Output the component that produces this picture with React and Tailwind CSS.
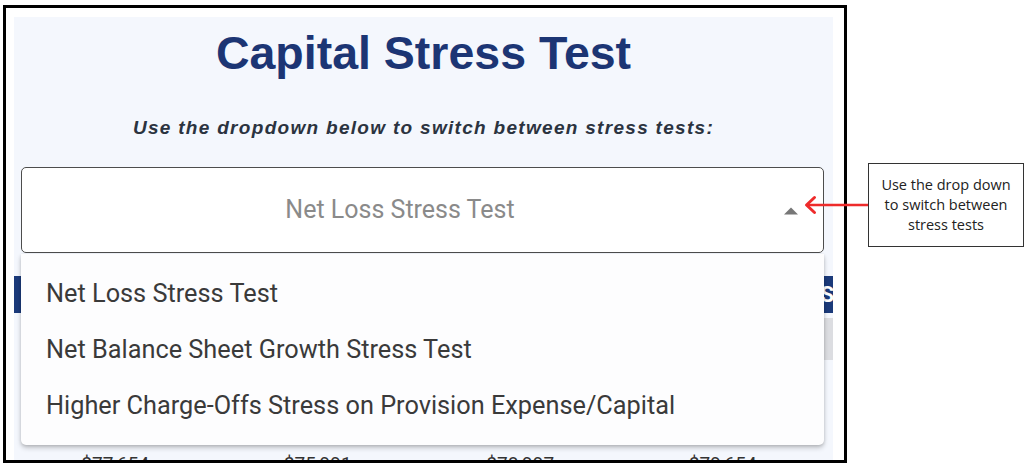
const stressTests = [
  "Net Loss Stress Test",
  "Net Balance Sheet Growth Stress Test",
  "Higher Charge-Offs Stress on Provision Expense/Capital",
];

const totals = ["$77,654", "$75,991", "$78,997", "$79,654"];

function TableBehind() {
  return (
    <div className="mt-[23px] w-full">
      <div className="h-[37px] bg-[#1b3a7a] text-white font-bold text-[22px] flex items-center justify-end overflow-hidden font-['Roboto',sans-serif]">
        <span className="-mr-[1px]">PROJECTIONS</span>
      </div>
      <div className="mt-[5px] h-[42px] grid grid-cols-4">
        <div />
        <div />
        <div />
        <div className="bg-[#dcdde1]" />
      </div>
      <div className="h-[90px]" />
      <div className="grid grid-cols-4 w-[810px] text-[19px] text-[#333] font-['Roboto',sans-serif]">
        {totals.map((t) => (
          <div key={t} className="text-center">{t}</div>
        ))}
      </div>
    </div>
  );
}

function Dropdown() {
  return (
    <>
      <div className="ml-[7px] mr-[9px] mt-[27px] h-[86px] rounded-[5px] border border-[#4d4d4d] bg-white relative flex items-center justify-center pr-[45px]">
        <span className="text-[25px] text-[#8a8a8a] font-['Roboto',sans-serif]">Net Loss Stress Test</span>
        <svg className="absolute right-[25px] top-[39px]" width="14" height="8" viewBox="0 0 14 8">
          <path d="M0 7.5 L7 0.5 L14 7.5 Z" fill="#777" />
        </svg>
      </div>
      <div className="absolute left-[7px] top-[237px] w-[803px] bg-[#fdfdfe] rounded-b-[5px] shadow-[0_3px_5px_rgba(0,0,0,0.2),0_1px_3px_rgba(0,0,0,0.12)] pt-[12px] pb-[11px] font-['Roboto',sans-serif]">
        {stressTests.map((name) => (
          <div key={name} className="h-[56px] flex items-center pl-[25px] text-[25.3px] text-[#3a3a3a]">
            {name}
          </div>
        ))}
      </div>
    </>
  );
}

export default function App() {
  return (
    <div className="relative flex w-[1028px] h-[470px] bg-white">
      <div className="ml-[3px] mt-[5px] w-[844px] h-[458px] shrink-0 border-[3px] border-black overflow-hidden pl-[8px] pt-[9px] pr-[11px]">
        <div className="relative h-[460px] bg-[#f4f7fd] pt-[10px] flex flex-col items-center">
          <h1 className="text-[46.5px] leading-[52px] font-bold text-[#1c3574] font-['Liberation_Sans',Arial,sans-serif]">
            Capital Stress Test
          </h1>
          <p className="mt-[37px] text-[19px] leading-[24px] font-bold italic tracking-[1.3px] text-[#2b3340] font-['Liberation_Sans',Arial,sans-serif]">
            Use the dropdown below to switch between stress tests:
          </p>
          <div className="w-full flex flex-col">
            <Dropdown />
            <TableBehind />
          </div>
        </div>
      </div>

      <div className="ml-[21px] mt-[163px] w-[156px] h-[84px] border border-[#333] bg-white flex items-center justify-center text-center text-[14.5px] leading-[20px] text-[#222] font-['Open_Sans',sans-serif]">
        Use the drop down
        <br />
        to switch between
        <br />
        stress tests
      </div>

      <svg className="absolute left-[803px] top-[195px]" width="66" height="20" viewBox="0 0 66 20">
        <path d="M4 10 H65" stroke="#ee2b2b" strokeWidth="2.6" />
        <path d="M11.5 2.5 L3.5 10 L11.5 17.5" stroke="#ee2b2b" strokeWidth="3" fill="none" strokeLinecap="round" strokeLinejoin="round" />
      </svg>
    </div>
  );
}
